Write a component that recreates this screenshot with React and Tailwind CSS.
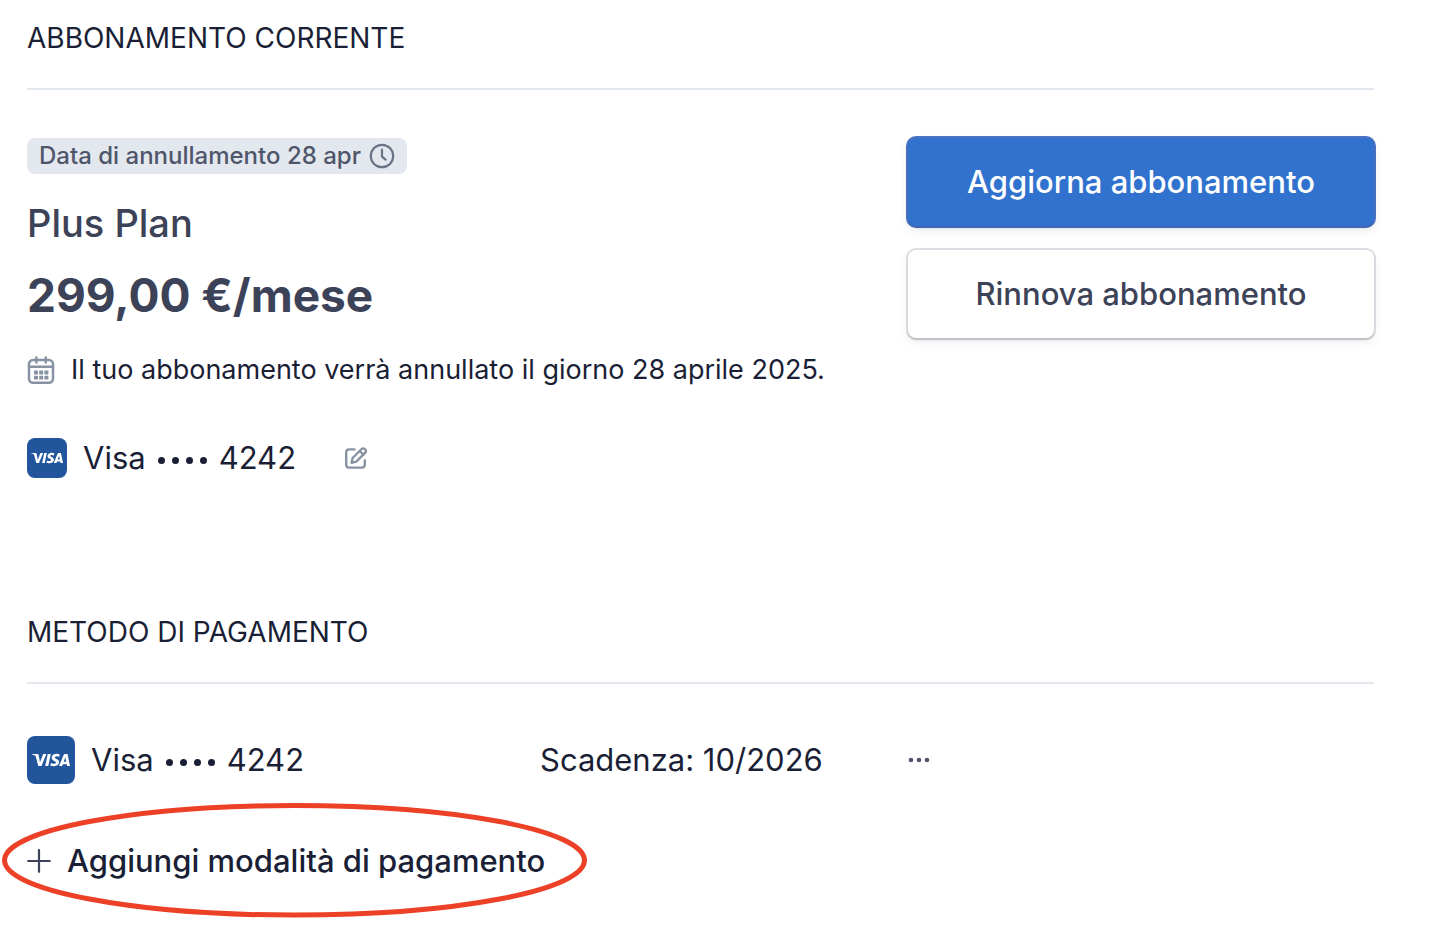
import React, { useState } from "react";
import { SiVisa } from "react-icons/si";

const ClockIcon = () => (
  <svg width="26" height="26" viewBox="0 0 26 26" fill="none" stroke="#697386" strokeWidth="2.2" strokeLinecap="round" strokeLinejoin="round" aria-hidden="true">
    <circle cx="13" cy="13" r="11.2" />
    <path d="M13 6.5v7.2l3.6 3" />
  </svg>
);

const CalendarIcon = () => (
  <svg width="28" height="28" viewBox="0 0 28 28" fill="none" stroke="#8792a2" strokeWidth="2.5" strokeLinecap="round" aria-hidden="true">
    <rect x="2" y="4" width="24" height="22.8" rx="4" />
    <path d="M2 10.8h24M9.4 1.6v5M18.8 1.6v5" />
    <g fill="#8792a2" stroke="none">
      <rect x="7" y="14.6" width="4" height="3.8" rx="0.6" />
      <rect x="12.2" y="14.6" width="4" height="3.8" rx="0.6" />
      <rect x="17.4" y="14.6" width="4" height="3.8" rx="0.6" />
      <rect x="7" y="19.8" width="4" height="3.8" rx="0.6" />
      <rect x="12.2" y="19.8" width="4" height="3.8" rx="0.6" />
      <rect x="17.4" y="19.8" width="4" height="3.8" rx="0.6" />
    </g>
  </svg>
);

const EditIcon = () => (
  <svg width="24" height="24" viewBox="0 0 24 24" fill="none" stroke="#8792a2" strokeWidth="2.4" strokeLinecap="round" strokeLinejoin="round" aria-hidden="true">
    <path d="M10.5 3.4H5a2.8 2.8 0 0 0-2.8 2.8v12.6A2.8 2.8 0 0 0 5 21.6h13a2.8 2.8 0 0 0 2.8-2.8V14.5" />
    <path d="M7.6 16.8l1-4.8 9-9a2.1 2.1 0 0 1 3 0l.7.7a2.1 2.1 0 0 1 0 3l-9 9z" />
    <path d="M15.8 5l3.6 3.6" />
  </svg>
);

const PlusIcon = () => (
  <svg width="24" height="24" viewBox="0 0 24 24" fill="none" stroke="#3c4257" strokeWidth="2.2" strokeLinecap="round" aria-hidden="true">
    <path d="M12 1.2v21.6M1.2 12h21.6" />
  </svg>
);

const MoreIcon = () => (
  <svg width="24" height="24" viewBox="0 0 24 24" fill="#4f566b" aria-hidden="true">
    <circle cx="3" cy="12" r="2.3" />
    <circle cx="11" cy="12" r="2.3" />
    <circle cx="19" cy="12" r="2.3" />
  </svg>
);

const SectionTitle = ({ children }) => (
  <h2 className="border-b-2 border-[#e3e8ee] pb-8 text-[28px] leading-9 font-normal uppercase">
    {children}
  </h2>
);

const CardNumber = () => (
  <span className="flex items-center gap-2">
    Visa
    <span className="flex gap-[7px] px-1 pt-1" role="img" aria-label="termina con">
      <span className="size-[7px] rounded-full bg-[#1a1f36]" />
      <span className="size-[7px] rounded-full bg-[#1a1f36]" />
      <span className="size-[7px] rounded-full bg-[#1a1f36]" />
      <span className="size-[7px] rounded-full bg-[#1a1f36]" />
    </span>
    4242
  </span>
);

const App = () => {
  const [menuOpen, setMenuOpen] = useState(false);

  return (
    <main className="bg-white pt-5 pr-16 pb-10 pl-[27px] font-['Inter',sans-serif] text-[#1a1f36]">
      {/* Abbonamento corrente */}
      <section>
        <SectionTitle>Abbonamento corrente</SectionTitle>
        <div className="flex items-start justify-between pt-12">
          <div>
            <span className="flex h-9 w-fit items-center gap-2 rounded-lg bg-[#e3e8ee] px-3 text-[24px] font-medium text-[#4f566b]">
              Data di annullamento 28 apr
              <ClockIcon />
            </span>
            <p className="mt-6 text-[38px] leading-[50px] font-medium text-[#3c4257]">Plus Plan</p>
            <p className="mt-5 text-[46px] leading-[54px] font-bold text-[#3c4257]">299,00 €/mese</p>
            <p className="mt-8 flex items-center gap-4 text-[27px] leading-8">
              <CalendarIcon />
              Il tuo abbonamento verrà annullato il giorno 28 aprile 2025.
            </p>
            <div className="mt-[52px] flex h-10 items-center gap-4 text-[31px]">
              <span className="flex size-10 items-center justify-center rounded-lg bg-[#22559c] text-white">
                <SiVisa size={32} />
              </span>
              <CardNumber />
              <button type="button" className="ml-8" aria-label="Modifica metodo di pagamento">
                <EditIcon />
              </button>
            </div>
          </div>
          <div className="flex w-[466px] shrink-0 flex-col gap-6">
            <button
              type="button"
              className="h-[88px] rounded-lg bg-[#3072ce] text-[31px] font-medium text-white shadow-[0_2px_2px_rgba(0,0,0,0.12),0_0_0_2px_#4b72c4,0_4px_10px_rgba(60,66,87,0.12)]"
            >
              Aggiorna abbonamento
            </button>
            <button
              type="button"
              className="h-[88px] rounded-lg bg-white text-[31px] font-medium text-[#3c4257] shadow-[0_2px_2px_rgba(0,0,0,0.14),0_0_0_2px_#dcdde3,0_4px_10px_rgba(60,66,87,0.1)]"
            >
              Rinnova abbonamento
            </button>
          </div>
        </div>
      </section>

      {/* Metodo di pagamento */}
      <section className="mt-[136px]">
        <SectionTitle>Metodo di pagamento</SectionTitle>
        <div className="mt-[52px] grid grid-cols-[513fr_368fr_466fr] items-center text-[31px]">
          <div className="flex items-center gap-4">
            <span className="flex size-12 items-center justify-center rounded-lg bg-[#22559c] text-white">
              <SiVisa size={38} />
            </span>
            <CardNumber />
          </div>
          <span>Scadenza: 10/2026</span>
          <button
            type="button"
            className="w-fit"
            aria-label="Altre opzioni"
            aria-expanded={menuOpen}
            onClick={() => setMenuOpen(!menuOpen)}
          >
            <MoreIcon />
          </button>
        </div>
        <div className="relative mt-14 w-fit">
          <button type="button" className="flex h-[42px] items-center gap-4 text-[31px] font-medium">
            <PlusIcon />
            Aggiungi modalità di pagamento
          </button>
          {/* Cerchio di evidenziazione */}
          <svg
            className="pointer-events-none absolute -top-10 -left-6 h-[120px] w-[584px] max-w-none overflow-visible"
            viewBox="0 0 584 120"
            fill="none"
            aria-hidden="true"
          >
            <ellipse cx="291.5" cy="60.3" rx="290" ry="54.8" stroke="#ec4027" strokeWidth="5" />
          </svg>
        </div>
      </section>
    </main>
  );
};

export default App;
